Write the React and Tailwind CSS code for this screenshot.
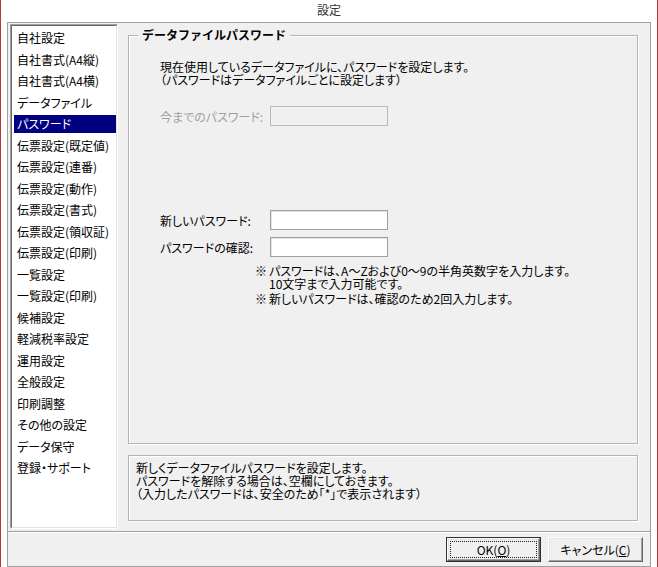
import React from 'react';

const items = [
  '自社設定',
  '自社書式(A4縦)',
  '自社書式(A4横)',
  'データファイル',
  'パスワード',
  '伝票設定(既定値)',
  '伝票設定(連番)',
  '伝票設定(動作)',
  '伝票設定(書式)',
  '伝票設定(領収証)',
  '伝票設定(印刷)',
  '一覧設定',
  '一覧設定(印刷)',
  '候補設定',
  '軽減税率設定',
  '運用設定',
  '全般設定',
  '印刷調整',
  'その他の設定',
  'データ保守',
  '登録・サポート',
];

function Field({ label, disabled, className }) {
  return (
    <div className={'flex items-center ' + (className || '')}>
      <div className={'w-[110px] leading-[13px] ' + (disabled ? 'text-[#a0a0a0]' : 'text-black')}>{label}</div>
      <div
        className={
          'w-[118px] h-[20px] border ' +
          (disabled
            ? 'bg-[#f0f0f0] border-[#b9b9b9]'
            : 'bg-white border-[#a0a0a0] shadow-[inset_1px_1px_0_#e3e3e3]')
        }
      />
    </div>
  );
}

function Button({ children, isDefault }) {
  return (
    <div
      className={
        'w-[95px] h-[25px] flex ' +
        (isDefault ? 'border border-[#303030]' : '')
      }
    >
      <div className="flex-1 flex border border-t-white border-l-white border-r-[#696969] border-b-[#696969] shadow-[inset_-1px_-1px_0_#a0a0a0,inset_1px_1px_0_#e3e3e3] bg-[#f0f0f0]">
        <div
          className={
            'flex-1 m-[2px] flex items-center justify-center leading-[12px] ' +
            (isDefault ? 'border border-dotted border-[#222]' : 'border border-transparent')
          }
        >
          {children}
        </div>
      </div>
    </div>
  );
}

export default function App() {
  return (
    <div
      className="w-[658px] h-[567px] bg-white border-l border-r border-[#b23a3a] flex flex-col text-[12px] text-black [font-feature-settings:'palt'] overflow-hidden"
      style={{ fontFamily: '"Noto Sans CJK JP", "Noto Sans", sans-serif' }}
    >
      {/* title bar */}
      <div className="h-[22px] flex items-center justify-center text-[#333] leading-[12px] pb-[3px]">設定</div>

      {/* client */}
      <div className="flex-1 mx-[6px] border border-[#a0a0a0] bg-[#f0f0f0] flex flex-col">
        <div className="h-[508px] flex">
          {/* listbox */}
          <div className="ml-[2px] mt-[1px] w-[108px] h-[505px] border border-t-[#a0a0a0] border-l-[#a0a0a0] border-r-white border-b-white">
            <div className="h-full bg-white border border-t-[#696969] border-l-[#696969] border-r-[#e3e3e3] border-b-[#e3e3e3] pt-[1.5px] pl-[2px]">
              {items.map((it, i) => (
                <div key={i} className="h-[21.5px] flex items-center">
                  <div
                    className={
                      'h-[18px] flex-1 flex items-center pl-[3px] leading-[12px] ' +
                      (i === 4 ? 'bg-[#000080] text-white' : '')
                    }
                  >
                    {it}
                  </div>
                </div>
              ))}
            </div>
          </div>

          {/* right column */}
          <div className="ml-[10px] w-[510px] pt-[12px] flex flex-col">
            {/* group box */}
            <div className="relative h-[409px] border border-[#b4b4b4] shadow-[inset_1px_1px_0_#fff,1px_1px_0_#fff]">
              <div className="absolute -top-[9px] left-[9px] px-[4px] bg-[#f0f0f0] font-bold leading-[16px] [font-feature-settings:normal]">
                データファイルパスワード
              </div>
              <div className="pl-[31px] pt-[24px] flex flex-col">
                <div className="leading-[13px]">
                  <div>現在使用しているデータファイルに、パスワードを設定します。</div>
                  <div>（パスワードはデータファイルごとに設定します）</div>
                </div>
                <Field label="今までのパスワード:" disabled className="mt-[20px]" />
                <Field label="新しいパスワード:" className="mt-[84px]" />
                <Field label="パスワードの確認:" className="mt-[7px]" />
                <div className="ml-[95px] mt-[7px] flex leading-[13px]">
                  <div className="w-[14px] [font-feature-settings:normal]">※</div>
                  <div>
                    <div>パスワードは、A～Zおよび0～9の半角英数字を入力します。</div>
                    <div>10文字まで入力可能です。</div>
                  </div>
                </div>
                <div className="ml-[95px] mt-[2px] flex leading-[13px]">
                  <div className="w-[14px] [font-feature-settings:normal]">※</div>
                  <div>新しいパスワードは、確認のため2回入力します。</div>
                </div>
              </div>
            </div>

            {/* description */}
            <div className="mt-[11px] h-[66px] border border-[#b4b4b4] shadow-[inset_1px_1px_0_#fff,1px_1px_0_#fff] px-[7px] pt-[5px] leading-[13px]">
              <div>新しくデータファイルパスワードを設定します。</div>
              <div>パスワードを解除する場合は、空欄にしておきます。</div>
              <div>（入力したパスワードは、安全のため「*」で表示されます）</div>
            </div>
          </div>
        </div>

        {/* separator */}
        <div className="h-[2px] border-t border-[#a0a0a0] border-b border-b-white" />

        {/* buttons */}
        <div className="flex-1 flex justify-end items-start pt-[4px] pr-[7px] gap-[7px]">
          <Button isDefault>
            OK(<span className="underline">O</span>)
          </Button>
          <Button>
            キャンセル(<span className="underline">C</span>)
          </Button>
        </div>
      </div>
    </div>
  );
}
